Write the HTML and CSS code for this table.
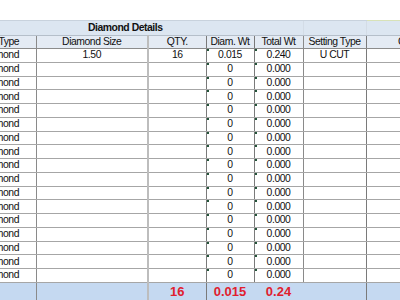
FILE: index.html
```html
<!DOCTYPE html>
<html>
<head>
<meta charset="utf-8">
<link rel="stylesheet" href="styles.css">
</head>
<body>
<div class="sheet">
<table class="grid">
<colgroup>
<col class="c1"><col class="c2"><col class="c3"><col class="c4"><col class="c5"><col class="c6"><col class="c7">
</colgroup>
<thead>
<tr class="band"><th colspan="5" class="band-title">Diamond Details</th><th class="band-cell"></th><th class="band-cell band-last"></th></tr>
<tr class="heads"><th class="v1 first-head">Stone Type</th><th class="v2">Diamond Size</th><th class="v3">QTY.</th><th class="v4">Diam. Wt</th><th class="v5">Total Wt</th><th class="v6">Setting Type</th><th>Comments</th></tr>
</thead>
<tbody>
<tr><td class="v1">Diamond</td><td class="v2">1.50</td><td class="v3">16</td><td class="v4 mark">0.015</td><td class="v5 mark">0.240</td><td class="v6">U CUT</td><td></td></tr>
<tr><td class="v1">Diamond</td><td class="v2"></td><td class="v3"></td><td class="v4 mark">0</td><td class="v5 mark">0.000</td><td class="v6"></td><td></td></tr>
<tr><td class="v1">Diamond</td><td class="v2"></td><td class="v3"></td><td class="v4 mark">0</td><td class="v5 mark">0.000</td><td class="v6"></td><td></td></tr>
<tr><td class="v1">Diamond</td><td class="v2"></td><td class="v3"></td><td class="v4 mark">0</td><td class="v5 mark">0.000</td><td class="v6"></td><td></td></tr>
<tr><td class="v1">Diamond</td><td class="v2"></td><td class="v3"></td><td class="v4 mark">0</td><td class="v5 mark">0.000</td><td class="v6"></td><td></td></tr>
<tr><td class="v1">Diamond</td><td class="v2"></td><td class="v3"></td><td class="v4 mark">0</td><td class="v5 mark">0.000</td><td class="v6"></td><td></td></tr>
<tr><td class="v1">Diamond</td><td class="v2"></td><td class="v3"></td><td class="v4 mark">0</td><td class="v5 mark">0.000</td><td class="v6"></td><td></td></tr>
<tr><td class="v1">Diamond</td><td class="v2"></td><td class="v3"></td><td class="v4 mark">0</td><td class="v5 mark">0.000</td><td class="v6"></td><td></td></tr>
<tr><td class="v1">Diamond</td><td class="v2"></td><td class="v3"></td><td class="v4 mark">0</td><td class="v5 mark">0.000</td><td class="v6"></td><td></td></tr>
<tr><td class="v1">Diamond</td><td class="v2"></td><td class="v3"></td><td class="v4 mark">0</td><td class="v5 mark">0.000</td><td class="v6"></td><td></td></tr>
<tr><td class="v1">Diamond</td><td class="v2"></td><td class="v3"></td><td class="v4 mark">0</td><td class="v5 mark">0.000</td><td class="v6"></td><td></td></tr>
<tr><td class="v1">Diamond</td><td class="v2"></td><td class="v3"></td><td class="v4 mark">0</td><td class="v5 mark">0.000</td><td class="v6"></td><td></td></tr>
<tr><td class="v1">Diamond</td><td class="v2"></td><td class="v3"></td><td class="v4 mark">0</td><td class="v5 mark">0.000</td><td class="v6"></td><td></td></tr>
<tr><td class="v1">Diamond</td><td class="v2"></td><td class="v3"></td><td class="v4 mark">0</td><td class="v5 mark">0.000</td><td class="v6"></td><td></td></tr>
<tr><td class="v1">Diamond</td><td class="v2"></td><td class="v3"></td><td class="v4 mark">0</td><td class="v5 mark">0.000</td><td class="v6"></td><td></td></tr>
<tr><td class="v1">Diamond</td><td class="v2"></td><td class="v3"></td><td class="v4 mark">0</td><td class="v5 mark">0.000</td><td class="v6"></td><td></td></tr>
<tr><td class="v1">Diamond</td><td class="v2"></td><td class="v3"></td><td class="v4 mark">0</td><td class="v5 mark">0.000</td><td class="v6"></td><td></td></tr>
</tbody>
<tfoot>
<tr class="total"><td class="v1"></td><td class="v2"></td><td class="v3">16</td><td class="v4">0.015</td><td class="v5">0.24</td><td class="v6"></td><td></td></tr>
</tfoot>
</table>
</div>
</body>
</html>
```

FILE: styles.css
```css
html, body {
  margin: 0;
  padding: 0;
  background: #ffffff;
}

.sheet {
  width: 400px;
  height: 300px;
  overflow: hidden;
  padding-top: 20px;
  box-sizing: border-box;
}

.grid {
  margin-left: -36px;
  border-collapse: collapse;
  table-layout: fixed;
  width: 512px;
  font-family: "Liberation Sans", Arial, sans-serif;
  font-size: 10.4px;
  letter-spacing: -0.45px;
  color: #111;
}

.c1 { width: 72px; }
.c2 { width: 112px; }
.c3 { width: 58px; }
.c4 { width: 48px; }
.c5 { width: 49px; }
.c6 { width: 63px; }
.c7 { width: 110px; }

.grid th,
.grid td {
  padding: 0;
  text-align: center;
  white-space: nowrap;
  overflow: hidden;
  border-top: 1px solid #a6a6a6;
  border-bottom: 1px solid #a6a6a6;
  font-weight: normal;
  line-height: 12px;
}

.band th {
  height: 14px;
  background: #dce6f1;
  border-top: 1px solid #c8d2dd;
  border-bottom: 1px solid #b5bfca;
}

.band-title {
  font-weight: bold !important;
  padding-right: 16px !important;
}

.band-cell {
  border-left: 1px solid #d3dce6;
}

.band-last {
  border-top: 1px solid #d8e2b8 !important;
}

.heads th {
  height: 12px;
  background: #e4ebf4;
  border-bottom: 1px solid #8c8c8c;
}

.heads .first-head {
  padding-right: 9px;
}

tbody tr {
  height: 13.76px;
}

tbody td {
  padding-top: 1px;
}

.v1 { border-right: 1px solid #8a8a8a; }
.v2 { border-right: 2px solid #bdbdbd; }
.v3 { border-right: 1px solid #7a7a7a; }
.v4 { border-right: 1px solid #7a7a7a; }
.v5 { border-right: 1px solid #8a8a8a; }
.v6 { border-right: 1px solid #7a7a7a; }

.mark {
  position: relative;
}

.mark::before {
  content: "";
  position: absolute;
  left: 0;
  top: 0;
  width: 2px;
  height: 2px;
  background: #24543a;
}

.total td {
  height: 18px;
  background: #c5d9f1;
  color: #e0202e;
  font-weight: bold;
  font-size: 13px;
  letter-spacing: 0;
  line-height: 16px;
  border-top: 1px solid #8a8a8a;
  vertical-align: top;
  padding-top: 1px;
}

.total .v4, .total .v5 { border-right-color: #c5d9f1; }
```
